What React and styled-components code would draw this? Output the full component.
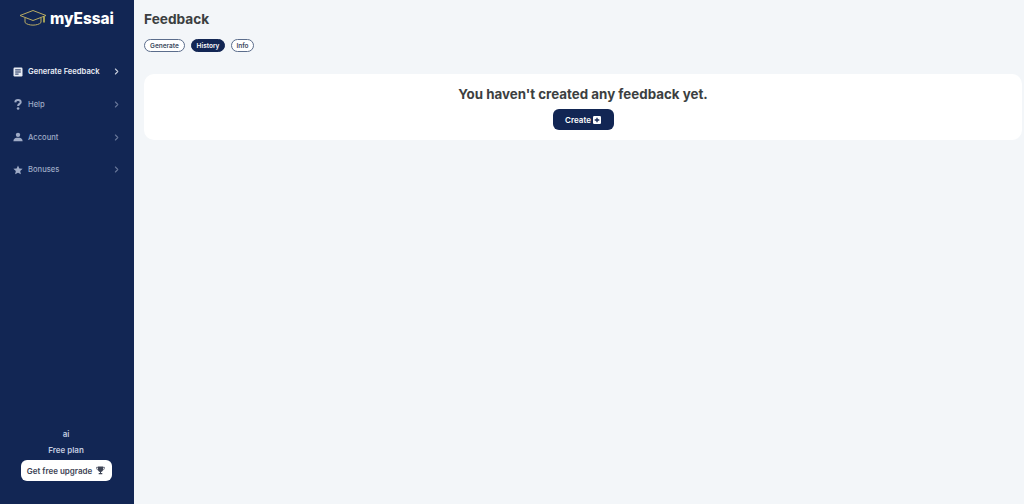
import React from "react";
import styled, { createGlobalStyle } from "styled-components";

const Global = createGlobalStyle`
  html, body { margin: 0; padding: 0; height: 100%; }
  body { font-family: Inter, "Liberation Sans", sans-serif; background: #f3f6f9; }
  #root { height: 100%; }
`;
const Page = styled.div`display: flex; width: 1024px; height: 504px; overflow: hidden;`;
const Sidebar = styled.aside`
  width: 134px; flex: none; background: #122654; display: flex; flex-direction: column;
  box-sizing: border-box; padding-top: 8px;
`;
const Brand = styled.div`display: flex; align-items: center; height: 20px; padding-left: 19px; gap: 3px;`;
const BrandName = styled.span`font-size: 15.4px; font-weight: 800; color: #fff;`;
const Nav = styled.nav`display: flex; flex-direction: column; margin-top: 27.6px;`;
const NavRow = styled.div`
  height: 32.6px; display: flex; align-items: center; padding: 0 15px 0 13px; gap: 5px;
  color: ${p => (p.$active ? "#e8ecf4" : "#9fabc6")};
  font-size: 7.6px;
`;
const NavIcon = styled.span`width: 10px; height: 12px; display: flex; align-items: center; justify-content: center; flex: none;`;
const NavLabel = styled.span`flex: 1; white-space: nowrap; font-weight: ${p => (p.$active ? 600 : 500)};`;
const ChevronWrap = styled.span`display: flex; opacity: ${p => (p.$active ? 0.85 : 0.6)};`;
const Foot = styled.div`margin-top: auto; padding: 0 2px 23px 0; display: flex; flex-direction: column; align-items: center;`;
const FootText = styled.div`font-size: 8px; font-weight: 600; color: #c4cde0; line-height: 13px; margin-bottom: 3px;`;
const Upgrade = styled.button`
  width: 91px; height: 21px; border: 0; border-radius: 6px; background: #fff; color: #3d4354;
  font: 600 8px Inter, sans-serif; display: flex; align-items: center; justify-content: center; gap: 4px; padding: 0;
`;
const Main = styled.main`flex: 1; min-width: 0; padding: 10px 0 0 10px; box-sizing: border-box;`;
const Title = styled.h1`margin: 0; font-size: 13.7px; line-height: 18px; font-weight: 700; color: #3c3f41;`;
const Tabs = styled.div`display: flex; gap: 6px; margin-top: 11px;`;
const Tab = styled.button`
  height: 13px; width: ${p => p.$w}px; padding: 0; border-radius: 7px; box-sizing: border-box;
  border: 1px solid ${p => (p.$active ? "#122654" : "#5b6d8c")};
  background: ${p => (p.$active ? "#122654" : "#fff")};
  color: ${p => (p.$active ? "#fff" : "#3d4a5e")};
  font: 600 6.5px Inter, sans-serif; display: flex; align-items: center; justify-content: center;
`;
const Card = styled.section`
  margin-top: 22px; width: 878px; height: 66px; background: #fff; border-radius: 10px;
  display: flex; flex-direction: column; align-items: center; box-sizing: border-box; padding-top: 11px;
`;
const CardTitle = styled.h2`margin: 0; font-size: 13.35px; line-height: 18px; font-weight: 700; color: #3c3f41; white-space: nowrap;`;
const CreateBtn = styled.button`
  margin-top: 6px; width: 61px; height: 21px; border: 0; border-radius: 6px; background: #122654; color: #fff;
  font: 600 8px Inter, sans-serif; display: flex; align-items: center; justify-content: center; gap: 2px; padding: 0;
`;
const Chevron = () => (
  <svg width="5" height="7" viewBox="0 0 5 7" fill="none" stroke="currentColor" strokeWidth="1.1" strokeLinecap="round" strokeLinejoin="round">
    <path d="M1.4 1 L3.8 3.5 L1.4 6" />
  </svg>
);
const Doc = () => (
  <svg width="10" height="10" viewBox="0 0 10 10">
    <rect x="0.5" y="0.5" width="9" height="9" rx="1.2" fill="currentColor" />
    <path d="M2.2 2.9H7.8M2.2 5H7.8M2.2 7.1H5.6" stroke="#122654" strokeWidth="1" />
  </svg>
);
const Question = () => (
  <svg width="8" height="11" viewBox="0 0 8 11" fill="none">
    <path d="M1.3 3.4C1.4 1.9 2.4 1.1 4 1.1C5.6 1.1 6.7 1.9 6.7 3.2C6.7 4.9 4.2 4.9 4.1 7" stroke="currentColor" strokeWidth="2" />
    <circle cx="4.1" cy="9.5" r="1.3" fill="currentColor" />
  </svg>
);
const User = () => (
  <svg width="11" height="10" viewBox="0 0 11 10" fill="currentColor">
    <circle cx="5.5" cy="2.6" r="2.4" />
    <path d="M0.4 9.6C0.4 7.2 2.2 5.8 3.8 5.8H7.2C8.8 5.8 10.6 7.2 10.6 9.6Z" />
  </svg>
);
const Star = () => (
  <svg width="11" height="10" viewBox="0 0 11 10" fill="currentColor">
    <path d="M5.5 0L7 3.3L10.6 3.7L7.9 6.1L8.7 9.7L5.5 7.9L2.3 9.7L3.1 6.1L0.4 3.7L4 3.3Z" />
  </svg>
);
const Trophy = () => (
  <svg width="9" height="9" viewBox="0 0 9 9" fill="#3d4354">
    <path d="M2 0.5H7V3.5C7 5 5.9 5.7 5 5.9V7H6.3V8.3H2.7V7H4V5.9C3.1 5.7 2 5 2 3.5Z" />
    <path d="M2 1.3H0.6C0.6 3 1.2 3.9 2.4 4.1M7 1.3H8.4C8.4 3 7.8 3.9 6.6 4.1" fill="none" stroke="#3d4354" strokeWidth="0.8" />
  </svg>
);
const PlusBox = () => (
  <svg width="8" height="8" viewBox="0 0 8 8">
    <rect width="8" height="8" rx="1.2" fill="#fff" />
    <path d="M4 1.7V6.3M1.7 4H6.3" stroke="#122654" strokeWidth="1.3" />
  </svg>
);
const Logo = () => (
  <svg width="28" height="18" viewBox="0 0 28 18" fill="none" stroke="#b9ab63" strokeWidth="1">
    <path d="M1 6.5L14 1.5L27 6.5L14 11.5Z" strokeLinejoin="round" />
    <path d="M6 9V13.5C9 17 19 17 22 13.5V9" />
    <path d="M25 7.5V13.5" stroke="#dcd25a" strokeWidth="1.4" />
  </svg>
);
const items = [
  { label: "Generate Feedback", icon: <Doc />, active: true },
  { label: "Help", icon: <Question /> },
  { label: "Account", icon: <User /> },
  { label: "Bonuses", icon: <Star /> },
];
export default function App() {
  return (
    <Page>
      <Global />
      <Sidebar>
        <Brand><Logo /><BrandName>myEssai</BrandName></Brand>
        <Nav>
          {items.map(i => (
            <NavRow key={i.label} $active={i.active}>
              <NavIcon>{i.icon}</NavIcon>
              <NavLabel $active={i.active}>{i.label}</NavLabel>
              <ChevronWrap $active={i.active}><Chevron /></ChevronWrap>
            </NavRow>
          ))}
        </Nav>
        <Foot>
          <FootText>ai</FootText>
          <FootText>Free plan</FootText>
          <Upgrade>Get free upgrade <Trophy /></Upgrade>
        </Foot>
      </Sidebar>
      <Main>
        <Title>Feedback</Title>
        <Tabs>
          <Tab $w={41}>Generate</Tab>
          <Tab $active $w={34}>History</Tab>
          <Tab $w={23}>Info</Tab>
        </Tabs>
        <Card>
          <CardTitle>You haven't created any feedback yet.</CardTitle>
          <CreateBtn>Create <PlusBox /></CreateBtn>
        </Card>
      </Main>
    </Page>
  );
}
